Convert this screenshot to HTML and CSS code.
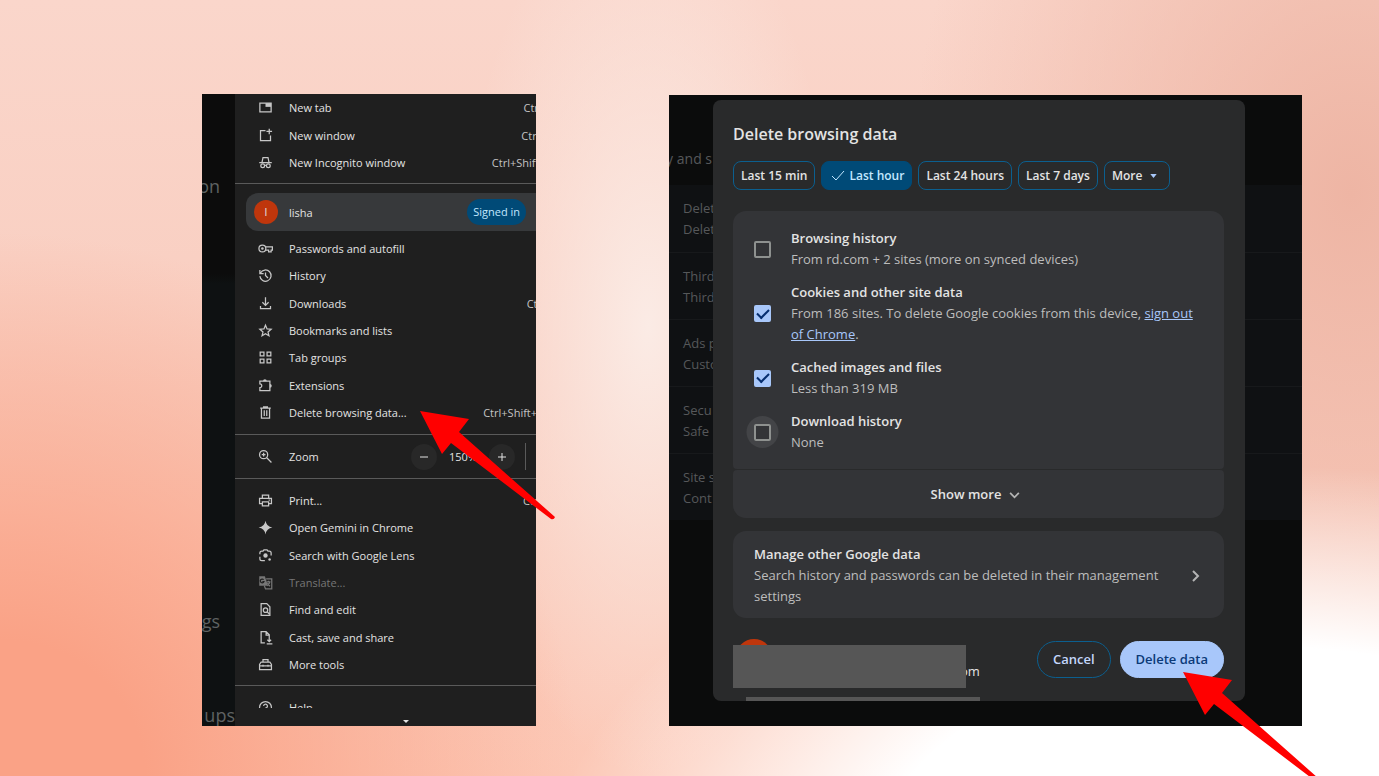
FILE: index.html
```html
<!DOCTYPE html>
<html lang="en">
<head>
<meta charset="utf-8">
<title>Delete browsing data</title>
<meta name="viewport" content="width=device-width, initial-scale=1">
<link rel="stylesheet" href="styles.css">
</head>
<body>
<main class="stage">
  <section class="shot shot-menu" aria-label="Browser menu">
    <div class="shot-clip menu-layout">
      <div class="page-strip" aria-hidden="true">
        <span class="strip-on">on</span>
        <span class="strip-gs">gs</span>
        <span class="strip-ups">ups</span>
      </div>
      <nav class="menu">
        <ul class="menu-group group-short">
          <li><a class="item" href="#"><svg class="icon" viewBox="0 0 24 24"><path d="M3 5h18v14H3z"/><path class="solid" d="M12 5h9v6h-9z"/></svg><span>New tab</span><kbd>Ctrl+T</kbd></a></li>
          <li><a class="item" href="#"><svg class="icon" viewBox="0 0 24 24"><path d="M12 4H4v16h16v-8M18 1v9M13.500 5.500h9"/></svg><span>New window</span><kbd>Ctrl+N</kbd></a></li>
          <li><a class="item" href="#"><svg class="icon" viewBox="0 0 24 24"><path d="M2 12h20M6.500 11.500 8 4h8l1.500 7.500"/><circle cx="7.500" cy="17" r="3"/><circle cx="16.500" cy="17" r="3"/><path d="M10.500 16.500h3"/></svg><span>New Incognito window</span><kbd>Ctrl+Shift+N</kbd></a></li>
        </ul>
        <a class="profile" href="#"><span class="avatar">l</span><span>lisha</span><span class="pill">Signed in</span></a>
        <ul class="menu-group group-long">
          <li><a class="item" href="#"><svg class="icon" viewBox="0 0 24 24"><circle cx="7" cy="12" r="5.500"/><circle class="solid" cx="7" cy="12" r="2"/><path d="M12 9.500h11v5h-2v3h-4v-3h-4.500"/></svg><span>Passwords and autofill</span></a></li>
          <li><a class="item" href="#"><svg class="icon" viewBox="0 0 24 24"><path d="M4 8a9 9 0 1 1-1 5M3 3v6h6M12 7v5l4 4"/></svg><span>History</span></a></li>
          <li><a class="item" href="#"><svg class="icon" viewBox="0 0 24 24"><path d="M12 2v13M7 10l5 5 5-5M4 16v4h16v-4"/></svg><span>Downloads</span><kbd>Ctrl+J</kbd></a></li>
          <li><a class="item" href="#"><svg class="icon" viewBox="0 0 24 24"><path d="m12 3.500 2.500 6 6.500.500-5 4.300 1.500 6.200-5.500-3.300-5.500 3.300L8 14.300 3 10l6.500-.500z"/></svg><span>Bookmarks and lists</span></a></li>
          <li><a class="item" href="#"><svg class="icon" viewBox="0 0 24 24"><path d="M3.500 3.500h6v6h-6zM14.500 3.500h6v6h-6zM3.500 14.500h6v6h-6zM14.500 14.500h6v6h-6z"/></svg><span>Tab groups</span></a></li>
          <li><a class="item" href="#"><svg class="icon" viewBox="0 0 24 24"><path d="M3 5h16v15H3v-4.500a3 3 0 0 0 0-6z"/><path class="solid" d="M8 5a3 3 0 0 1 6 0zM19 9.500a3 3 0 0 1 0 6z"/></svg><span>Extensions</span></a></li>
          <li><a class="item" href="#"><svg class="icon" viewBox="0 0 24 24"><path d="M3.500 5h17M9 4.500V3h6v1.500M5.500 5v16h13V5M10 8.500v9M14 8.500v9"/></svg><span>Delete browsing data...</span><kbd>Ctrl+Shift+Del</kbd></a></li>
        </ul>
        <div class="zoom">
          <svg class="icon" viewBox="0 0 24 24"><circle cx="9" cy="9" r="6.500"/><path d="m14 14 7.500 7.500M6 9h6M9 6v6"/></svg>
          <span class="zoom-name">Zoom</span>
          <button class="round" type="button" aria-label="Zoom out"><svg viewBox="0 0 12 12"><path d="M2 6h8"/></svg></button>
          <span class="zoom-value">150%</span>
          <button class="round" type="button" aria-label="Zoom in"><svg viewBox="0 0 12 12"><path d="M2 6h8M6 2v8"/></svg></button>
          <span class="zoom-bar"></span>
        </div>
        <ul class="menu-group group-long group-tools">
          <li><a class="item" href="#"><svg class="icon" viewBox="0 0 24 24"><path d="M7 8V3.500h10V8M6 17H2.500V8.500h19V17H18M7 14h10v6.500H7z"/><path d="M17 11.500h2"/></svg><span>Print...</span><kbd>Ctrl+P</kbd></a></li>
          <li><a class="item" href="#"><svg class="icon" viewBox="0 0 24 24"><path class="solid" d="M12 1q1.500 9.500 11 11-9.500 1.500-11 11Q10.500 13.500 1 12 10.500 10.500 12 1z"/></svg><span>Open Gemini in Chrome</span></a></li>
          <li><a class="item" href="#"><svg class="icon" viewBox="0 0 24 24"><path d="M3 10V8a3 3 0 0 1 3-3h2l1.500-2h5L16 5h2a3 3 0 0 1 3 3v4M3 14v3a3 3 0 0 0 3 3h5"/><circle class="solid" cx="12" cy="12" r="3.500"/><circle class="solid" cx="18.500" cy="18.500" r="2"/></svg><span>Search with Google Lens</span></a></li>
          <li><a class="item disabled" href="#" aria-disabled="true"><svg class="icon" viewBox="0 0 24 24"><path class="solid" d="M2 2h9l5 15H2z"/><path d="M13 6h9v16H12l-2-5M14 11h6M17 9v2M19 11q-1 4-4 6M15 13l4 5"/><path class="cut" d="M9 7.500a3 3 0 1 0 .500 3H7"/></svg><span>Translate...</span></a></li>
          <li><a class="item" href="#"><svg class="icon" viewBox="0 0 24 24"><path d="M5 2.500h9l5 5v14H5z"/><circle cx="12" cy="13" r="3.500"/><path d="m14.500 15.500 4 4"/></svg><span>Find and edit</span></a></li>
          <li><a class="item" href="#"><svg class="icon" viewBox="0 0 24 24"><path d="M11 20.500H5v-18h8l5 5V12M13 3v5h5M18 12v6M15 15.500l3 3 3-3M14 22h9"/></svg><span>Cast, save and share</span></a></li>
          <li><a class="item" href="#"><svg class="icon" viewBox="0 0 24 24"><path d="M8 8V4h8v4M5 8h14l2.500 4v8h-19v-8zM2.500 14h19M8 12.500v3M16 12.500v3"/></svg><span>More tools</span></a></li>
        </ul>
        <div class="help-row">
          <a class="item" href="#"><svg class="icon" viewBox="0 0 24 24"><circle cx="12" cy="12" r="9.500"/><path d="M9 9.500a3 3 0 1 1 4 3q-1 .500-1 2M12 16.500v2"/></svg><span>Help</span></a>
        </div>
        <div class="menu-more"><svg viewBox="0 0 8 5"><path d="M1 1h6L4 4z"/></svg></div>
      </nav>
    </div>
    <svg class="pointer pointer-menu" viewBox="0 0 136 110" aria-hidden="true"><path d="M0 0 49 8 39 21 135 106Q134 109 131 108L31 32 22 43z"/></svg>
  </section>

  <section class="shot shot-dialog" aria-label="Settings">
    <div class="shot-clip dialog-layout">
      <div class="settings" aria-hidden="true">
        <p class="settings-title">y and s</p>
        <ul class="settings-list">
          <li>Delet<br>Delet</li>
          <li>Third<br>Third</li>
          <li>Ads p<br>Custo</li>
          <li>Secu<br>Safe</li>
          <li>Site s<br>Cont</li>
        </ul>
      </div>
      <form class="dialog" role="dialog" aria-labelledby="dialog-title">
        <h1 id="dialog-title">Delete browsing data</h1>
        <div class="chips">
          <button class="chip" type="button">Last 15 min</button>
          <button class="chip chip-on" type="button"><svg viewBox="0 0 14 12"><path d="m1 6 4 4 8-9"/></svg>Last hour</button>
          <button class="chip" type="button">Last 24 hours</button>
          <button class="chip" type="button">Last 7 days</button>
          <button class="chip chip-more" type="button">More<svg viewBox="0 0 8 5"><path class="solid" d="M0 0h8L4 5z"/></svg></button>
        </div>
        <div class="card options">
          <div class="option"><input type="checkbox" id="c1"><div><label for="c1">Browsing history</label><p>From rd.com + 2 sites (more on synced devices)</p></div></div>
          <div class="option"><input type="checkbox" id="c2" checked><div><label for="c2">Cookies and other site data</label><p>From 186 sites. To delete Google cookies from this device, <a href="#">sign out of Chrome</a>.</p></div></div>
          <div class="option"><input type="checkbox" id="c3" checked><div><label for="c3">Cached images and files</label><p>Less than 319 MB</p></div></div>
          <div class="option"><input class="hovered" type="checkbox" id="c4"><div><label for="c4">Download history</label><p>None</p></div></div>
        </div>
        <button class="card show-more" type="button">Show more<svg viewBox="0 0 12 8"><path d="m1 1 5 5 5-5"/></svg></button>
        <a class="card manage" href="#"><span class="manage-text"><strong>Manage other Google data</strong><span>Search history and passwords can be deleted in their management settings</span></span><svg viewBox="0 0 8 12"><path d="m1 1 5 5-5 5"/></svg></a>
        <div class="footer">
          <div class="account">
            <span class="account-avatar"></span>
            <span class="account-mail">om</span>
            <span class="mask"></span>
            <span class="mask-line"></span>
          </div>
          <button class="action cancel" type="button">Cancel</button>
          <button class="action delete" type="button">Delete data</button>
        </div>
      </form>
    </div>
    <svg class="pointer pointer-dialog" viewBox="0 0 136 110" aria-hidden="true"><path d="M0 0 49 8 39 21 135 106Q134 109 131 108L31 32 22 43z"/></svg>
  </section>
</main>
</body>
</html>
```
FILE: styles.css
```css
* { box-sizing: border-box; }

body {
  margin: 0;
  font-family: "Open Sans", "Noto Sans", sans-serif;
  color: #e3e3e3;
}

ul, p, h1 { margin: 0; padding: 0; }
ul { list-style: none; }
a { color: inherit; text-decoration: none; }
button { font: inherit; color: inherit; }

svg { fill: none; stroke: currentColor; stroke-width: 2; flex: none; }
.solid { fill: currentColor; stroke: none; }

.stage {
  min-height: 100vh;
  padding: 94px 0 50px;
  overflow: hidden;
  display: grid;
  grid-template-columns: 202fr 334fr 133fr 633fr 77fr;
  align-items: start;
  background:
    radial-gradient(ellipse 52% 52% at 92% 112%, #ffffff 55%, #ffffff00 100%),
    radial-gradient(ellipse 14% 58% at 47% 42%, #fbebe5 0%, #fbebe500 100%),
    radial-gradient(ellipse 42% 70% at 0% 100%, #faa286 25%, #faa28600 100%),
    radial-gradient(ellipse 32% 75% at 98% 25%, #eeb5a4 0%, #eeb5a400 100%),
    linear-gradient(180deg, #fad6cb 0%, #f9cdbf 50%, #fcc8b6 100%);
}

.shot { position: relative; min-width: 0; }
.shot-menu { grid-column: 2; }
.shot-dialog { grid-column: 4; padding-top: 1px; }
.shot-clip { overflow: hidden; }

.pointer {
  position: absolute;
  width: 136px;
  height: 110px;
  stroke: none;
  fill: #ff0000;
}
.pointer-menu { left: 218px; top: 317px; }
.pointer-dialog { right: -17px; top: 578px; }

/* Menu */
.menu-layout {
  display: grid;
  grid-template-columns: 33px minmax(0, 1fr);
  background: #1f1f1f;
  font-size: 11px;
}

.page-strip {
  display: flex;
  flex-direction: column;
  align-items: flex-end;
  padding-top: 80px;
  overflow: hidden;
  background: linear-gradient(#0c0c0c 0 180px, #0e1112 190px);
  color: #5f6262;
  font-size: 18px;
  line-height: 24px;
}
.strip-on, .strip-gs { padding-right: 15px; }
.strip-gs { margin-top: 411px; }
.strip-ups { margin: 70px 0 -2px; }

.menu { min-width: 0; }
.menu-group {
  display: flex;
  flex-direction: column;
  justify-content: space-between;
}
.group-short {
  min-height: 90px;
  padding: 0 0 7px;
  border-bottom: 1px solid #5a5a5a;
}
.group-long {
  min-height: 204px;
  padding: 4px 0 8px;
  border-bottom: 1px solid #5a5a5a;
}
.group-tools { min-height: 207px; padding: 8px 0 7px; }

.item {
  display: flex;
  align-items: center;
  gap: 16px;
  height: 27px;
  padding-left: 23px;
  white-space: nowrap;
}
.item kbd {
  margin: 0 -18px 0 auto;
  font: inherit;
  color: #c4c4c4;
}
.icon { width: 15px; height: 15px; color: #c7c7c7; }
.disabled, .disabled .icon { color: #767676; }
.cut { stroke: #1f1f1f; }

.profile {
  display: flex;
  align-items: center;
  height: 38px;
  margin: 9px 0 0 11px;
  padding: 0 10px 0 8px;
  border-radius: 12px 0 0 12px;
  background: #37393b;
}
.avatar {
  width: 24px;
  height: 24px;
  margin-right: 11px;
  border-radius: 50%;
  background: #bf360c;
  text-align: center;
  line-height: 24px;
}
.pill {
  margin-left: auto;
  padding: 0 6px;
  border-radius: 13px;
  background: #004a77;
  color: #c2e7ff;
  line-height: 26px;
}

.zoom {
  display: flex;
  align-items: center;
  height: 44px;
  padding: 0 10px 0 23px;
  border-bottom: 1px solid #5a5a5a;
}
.zoom-name { margin: 0 auto 0 16px; }
.zoom-value { width: 52px; text-align: center; }
.round {
  display: grid;
  place-items: center;
  width: 26px;
  height: 26px;
  padding: 0;
  border: 0;
  border-radius: 50%;
  background: #282828;
}
.round svg { width: 12px; height: 12px; stroke-width: 1; }
.zoom-bar { width: 1px; height: 27px; margin-left: 10px; background: #5a5a5a; }

.help-row { height: 22px; padding-top: 8px; overflow: hidden; }
.menu-more {
  display: grid;
  place-items: center;
  height: 18px;
  padding: 8px 0 0 40px;
}
.menu-more svg { width: 8px; height: 5px; fill: currentColor; stroke: none; }

/* Settings page behind the dialog */
.dialog-layout {
  display: grid;
  background: #0b0c0c;
  font-size: 13px;
  line-height: 21px;
}
.settings, .dialog { grid-area: 1 / 1; min-width: 0; }
.settings { color: #56585a; }
.settings-title { width: 43px; height: 90px; padding-top: 53px; font-size: 14px; direction: rtl; white-space: nowrap; }
.settings-list { background: #0f1113; }
.settings-list li { height: 67px; padding: 13px 0 0 14px; }
.settings-list li + li { border-top: 1px solid #17191b; }

/* Dialog */
.dialog {
  margin: 5px 57px 25px 44px;
  padding: 23px 21px 0 20px;
  border-radius: 8px;
  background: #292a2b;
  overflow: hidden;
}
.dialog h1 { font-size: 16px; font-weight: 600; line-height: 22px; }

.chips { display: flex; gap: 6px; margin: 16px 0 21px; }
.chip {
  display: flex;
  align-items: center;
  height: 29px;
  padding: 0 7px;
  border: 1px solid #0b5f8f;
  border-radius: 8px;
  background: none;
  font-size: 12px;
  font-weight: 600;
  white-space: nowrap;
}
.chip-on { border-color: #004a77; background: #004a77; color: #c2e7ff; }
.chip-on svg { width: 14px; height: 12px; margin: 0 4px 0 2px; }
.chip svg { stroke-width: 1; }
.chip-more svg { width: 7px; height: 4px; margin: 0 5px 0 8px; color: #a8c7fa; }

.card { background: #333437; border-radius: 13px; }
.options {
  display: grid;
  gap: 12px;
  padding: 17px 20px 16px 21px;
  border-radius: 13px 13px 4px 4px;
}
.option { display: flex; align-items: center; gap: 20px; }
.option label, .manage strong { display: block; font-weight: 600; }
.option p, .manage-text { color: #bdbdbd; }
.manage strong { color: #e3e3e3; }
.option a { color: #a8c7fa; text-decoration: underline; }

.option input {
  appearance: none;
  flex: none;
  display: grid;
  place-items: center;
  width: 17px;
  height: 17px;
  margin: 0;
  border: 2px solid #8e918f;
  border-radius: 2px;
}
.option input:checked { border-color: #a8c7fa; background: #a8c7fa; }
.option input:checked::before {
  content: "";
  width: 10px;
  height: 5px;
  margin-bottom: 3px;
  border: solid #062e6f;
  border-width: 0 0 2px 2px;
  transform: rotate(-45deg);
}
.option .hovered { box-shadow: 0 0 0 8px #434447; clip-path: circle(16px); }

.show-more {
  display: flex;
  align-items: center;
  justify-content: center;
  gap: 8px;
  width: 100%;
  height: 48px;
  margin-top: 1px;
  padding: 0 6px 0 0;
  border: 0;
  border-radius: 4px 4px 13px 13px;
  font-weight: 600;
}
.show-more svg { width: 11px; height: 7px; margin-top: 2px; color: #b4b4b4; }

.manage {
  display: flex;
  align-items: center;
  justify-content: space-between;
  gap: 24px;
  margin-top: 13px;
  padding: 13px 24px 11px 21px;
}
.manage svg { width: 8px; height: 12px; color: #b4b4b4; }

.footer {
  display: flex;
  align-items: flex-start;
  gap: 9px;
  margin-top: 21px;
}
.account { position: relative; flex: 1; height: 62px; }
.account-avatar {
  display: block;
  width: 36px;
  height: 36px;
  margin-left: 3px;
  border-radius: 50%;
  background: #bf360c;
}
.account-mail { display: block; margin: -14px 0 0 227px; }
.mask, .mask-line { position: absolute; left: 0; background: #565656; }
.mask { top: 6px; width: 233px; height: 43px; }
.mask-line { left: 13px; top: 58px; width: 234px; height: 4px; }

.action {
  height: 37px;
  margin-top: 2px;
  padding: 0 15px;
  border: 1px solid #0b5f8f;
  border-radius: 19px;
  background: none;
  color: #c4d7fb;
  font-weight: 600;
}
.delete { border-color: #a8c7fa; background: #a8c7fa; color: #0b3a78; }
```
